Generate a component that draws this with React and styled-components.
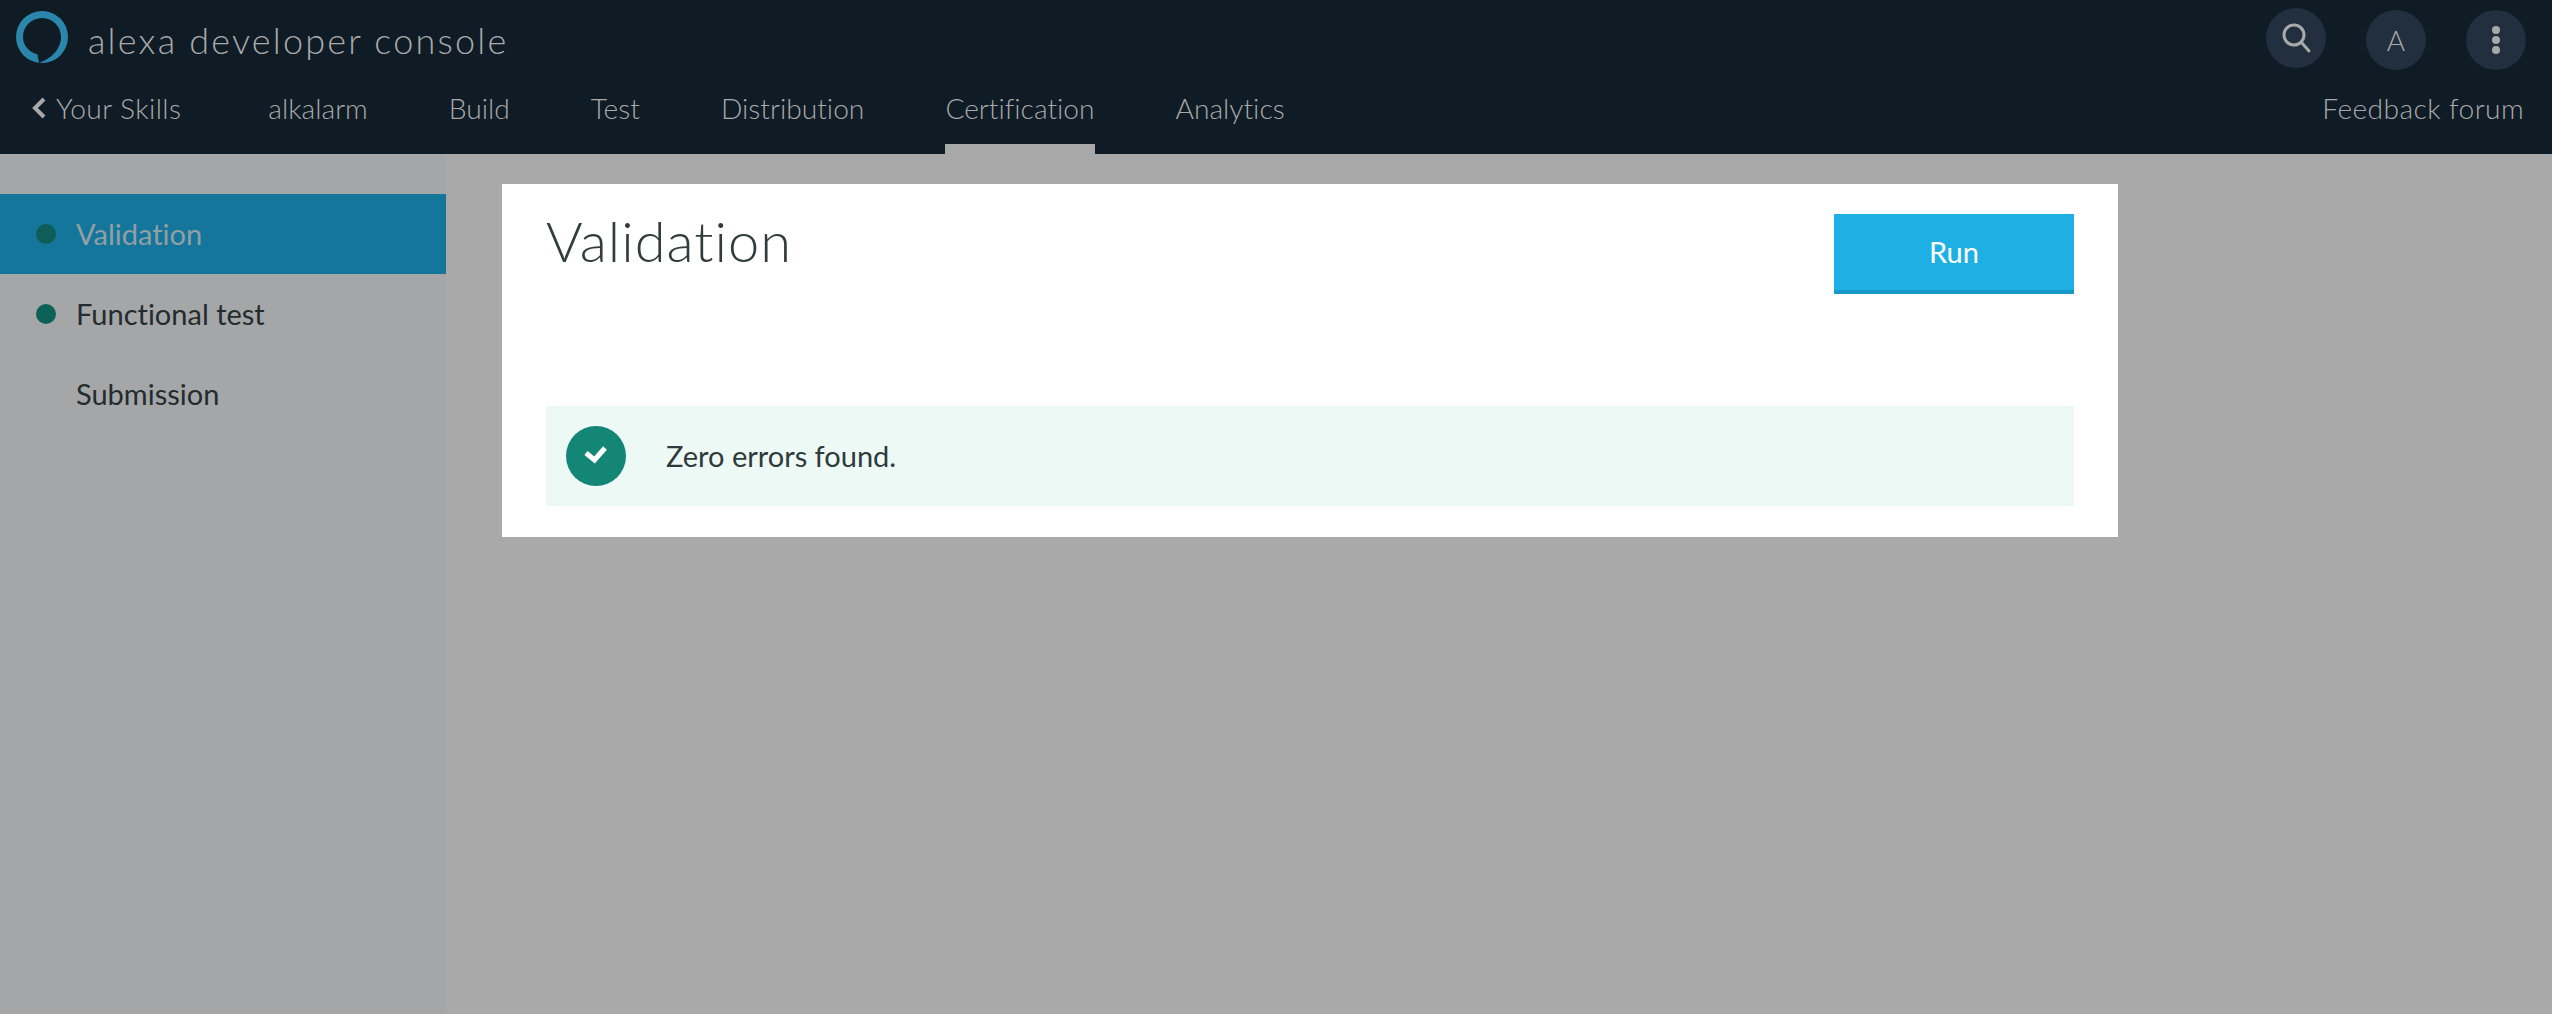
import React from "react";
import styled, { createGlobalStyle } from "styled-components";

const GlobalStyle = createGlobalStyle`
  html, body {
    margin: 0;
    height: 100%;
    background: #a9a9a9;
    font-family: "Lato", "Liberation Sans", sans-serif;
    font-variant-ligatures: none;
  }
  #root {
    height: 100%;
  }
`;

const Page = styled.div`
  display: flex;
  flex-direction: column;
  height: 100vh;
  overflow: hidden;
`;

const Header = styled.header`
  flex: none;
  height: 154px;
  background: #0f1c26;
  color: #a9a9a9;
  display: flex;
  flex-direction: column;
`;

const TopBar = styled.div`
  height: 76px;
  display: flex;
  align-items: flex-start;
  justify-content: space-between;
  padding: 8px 26px 0 16px;
  box-sizing: border-box;
`;

const Brand = styled.div`
  display: flex;
  align-items: center;
  gap: 20px;
`;

const BrandName = styled.span`
  font-size: 36px;
  font-weight: 300;
  letter-spacing: 2.2px;
  line-height: 52px;
  padding-top: 6px;
`;

const TopActions = styled.div`
  display: flex;
  gap: 40px;
`;

const RoundButton = styled.div`
  width: 60px;
  height: 60px;
  border-radius: 50%;
  background: #212f3f;
  display: flex;
  align-items: center;
  justify-content: center;
  font-size: 28px;
  font-weight: 300;
  margin-top: ${({ $raised }) => ($raised ? "0" : "2px")};
`;

const NavBar = styled.nav`
  flex: 1;
  display: flex;
  justify-content: space-between;
  padding: 0 28px 0 32px;
`;

const NavList = styled.div`
  display: flex;
  gap: 81px;
`;

const NavItem = styled.a`
  display: flex;
  align-items: center;
  gap: 10px;
  height: 78px;
  box-sizing: border-box;
  padding-bottom: ${({ $active }) => ($active ? "4px" : "14px")};
  border-bottom: ${({ $active }) => ($active ? "10px solid #a9a9a9" : "none")};
  font-size: 28.2px;
  font-weight: 300;
  letter-spacing: ${({ $wide }) => ($wide ? "0.4px" : "0")};
  margin-right: ${({ $back }) => ($back ? "6px" : "0")};
  white-space: nowrap;
`;

const Body = styled.div`
  flex: 1;
  display: flex;
  min-height: 0;
`;

const Sidebar = styled.aside`
  flex: none;
  width: 446px;
  padding-top: 40px;
  background: #a5a6a8;
`;

const SideItem = styled.div`
  height: 80px;
  box-sizing: border-box;
  padding-bottom: 2px;
  display: flex;
  align-items: center;
  gap: 20px;
  padding-left: ${({ $done }) => ($done ? "36px" : "76px")};
  font-size: 29px;
  font-weight: 400;
  color: ${({ $active }) => ($active ? "#929fa5" : "#232c2e")};
  background: ${({ $active }) => ($active ? "#14769b" : "transparent")};
`;

const StatusDot = styled.span`
  width: 20px;
  height: 20px;
  border-radius: 50%;
  margin-top: 2px;
  background: ${({ $active }) => ($active ? "#0f5d58" : "#0e6156")};
`;

const Main = styled.main`
  flex: 1;
  padding: 30px 56px;
`;

const Card = styled.section`
  width: 1616px;
  height: 353px;
  box-sizing: border-box;
  padding: 30px 44px 31px;
  background: #fff;
  display: flex;
  flex-direction: column;
  justify-content: space-between;
`;

const CardHead = styled.div`
  display: flex;
  justify-content: space-between;
  align-items: flex-start;
`;

const Title = styled.h1`
  margin: -6px 0 0;
  font-size: 56px;
  font-weight: 300;
  letter-spacing: 1px;
  line-height: 66px;
  color: #323c3e;
`;

const RunButton = styled.button`
  width: 240px;
  height: 80px;
  border: 0;
  border-bottom: 4px solid #1999c5;
  border-radius: 0;
  padding: 0 0 2px;
  background: #1eb0e4;
  color: #fff;
  font-family: inherit;
  font-size: 29px;
  font-weight: 400;
`;

const Notice = styled.div`
  height: 100px;
  display: flex;
  align-items: center;
  gap: 40px;
  padding-left: 20px;
  background: #edf9f5;
  font-size: 29px;
  color: #2f3a3c;
`;

const NoticeText = styled.span`
  margin-top: -2px;
`;

const NoticeIcon = styled.span`
  width: 60px;
  height: 60px;
  border-radius: 50%;
  background: #138675;
  display: flex;
  align-items: center;
  justify-content: center;
`;

const tabs = ["alkalarm", "Build", "Test", "Distribution", "Certification", "Analytics"];

export default function App() {
  return (
    <Page>
      <GlobalStyle />
      <Header>
        <TopBar>
          <Brand>
            <svg width="52" height="52" viewBox="0 0 52 52">
              <path
                fillRule="evenodd"
                fill="#2a86aa"
                d="M26 0A26 26 0 1 0 26 52A26 26 0 1 0 26 0ZM23 51.800L21.500 43.500C12.500 41 7 34 7 26C7 15.500 15.500 7 26 7S45 15.500 45 26C45 38 35 48 23 51.800Z"
              />
            </svg>
            <BrandName>alexa developer console</BrandName>
          </Brand>
          <TopActions>
            <RoundButton $raised>
              <svg width="32" height="32" viewBox="0 0 32 32" fill="none" stroke="#a9a9a9" strokeWidth="3" strokeLinecap="round">
                <circle cx="14" cy="13" r="10" />
                <path d="M21.500 20.500L29 29" />
              </svg>
            </RoundButton>
            <RoundButton>A</RoundButton>
            <RoundButton>
              <svg width="10" height="28" viewBox="0 0 10 28" fill="#a9a9a9">
                <circle cx="5" cy="4" r="4" />
                <circle cx="5" cy="14" r="4" />
                <circle cx="5" cy="24" r="4" />
              </svg>
            </RoundButton>
          </TopActions>
        </TopBar>
        <NavBar>
          <NavList>
            <NavItem $back $wide>
              <svg width="14" height="22" viewBox="0 0 14 22" fill="none" stroke="#a9a9a9" strokeWidth="4">
                <path d="M12 2L3 11l9 9" />
              </svg>
              Your Skills
            </NavItem>
            {tabs.map((tab) => (
              <NavItem key={tab} $active={tab === "Certification"}>
                {tab}
              </NavItem>
            ))}
          </NavList>
          <NavItem $wide>Feedback forum</NavItem>
        </NavBar>
      </Header>
      <Body>
        <Sidebar>
          <SideItem $active $done>
            <StatusDot $active />
            Validation
          </SideItem>
          <SideItem $done>
            <StatusDot />
            Functional test
          </SideItem>
          <SideItem>Submission</SideItem>
        </Sidebar>
        <Main>
          <Card>
            <CardHead>
              <Title>Validation</Title>
              <RunButton>Run</RunButton>
            </CardHead>
            <Notice>
              <NoticeIcon>
                <svg width="26" height="22" viewBox="0 0 26 22" fill="none" stroke="#fff" strokeWidth="5">
                  <path d="M3 8l8.500 7L22 3" />
                </svg>
              </NoticeIcon>
              <NoticeText>Zero errors found.</NoticeText>
            </Notice>
          </Card>
        </Main>
      </Body>
    </Page>
  );
}
